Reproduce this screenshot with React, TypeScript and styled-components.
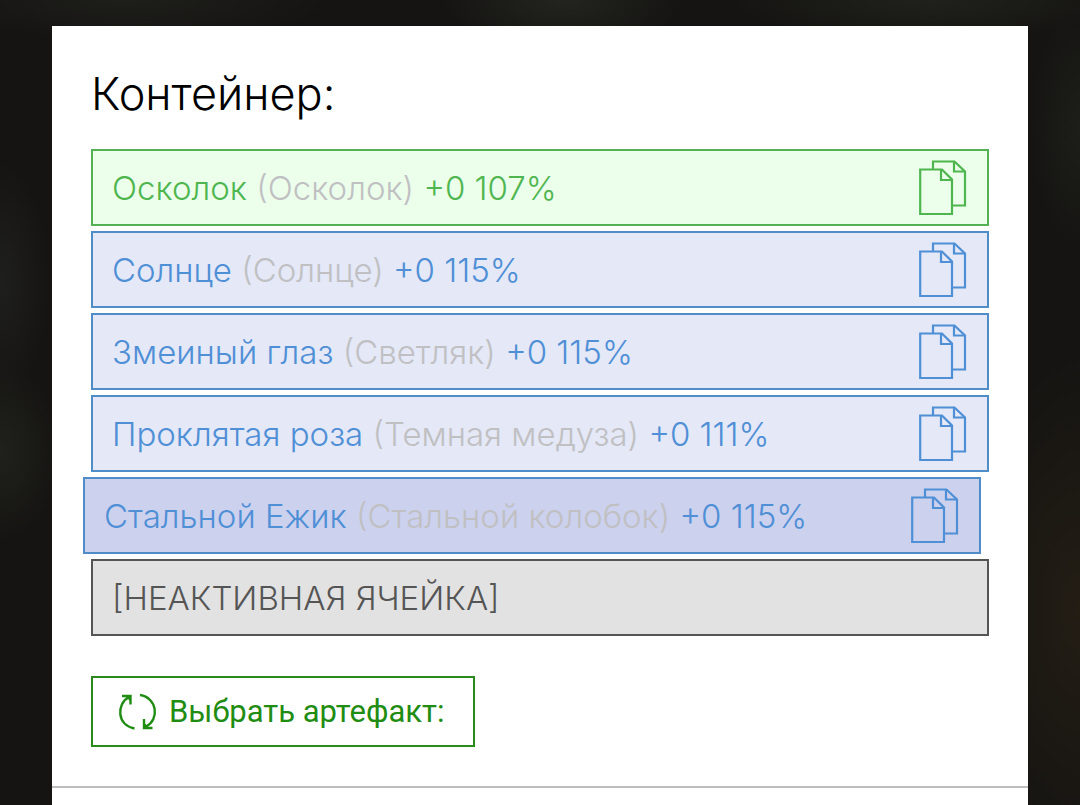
import React from "react";
import styled, { createGlobalStyle } from "styled-components";

const GlobalStyle = createGlobalStyle`
  *, *::before, *::after { box-sizing: border-box; }
  body {
    margin: 0;
    background:
      radial-gradient(ellipse 120px 260px at 100% 76%, #231d14, transparent),
      radial-gradient(ellipse 60px 90px at 0 56%, #20211c, transparent),
      radial-gradient(ellipse 50px 120px at 0 35%, #1f1f1d, transparent),
      radial-gradient(ellipse 50px 120px at 100% 16%, #1d1e1a, transparent),
      radial-gradient(ellipse 120px 50px at 52% 0, #232420, transparent),
      radial-gradient(ellipse 200px 40px at 86% 0, #20211c, transparent),
      radial-gradient(ellipse 200px 40px at 12% 0, #1e1e1b, transparent),
      #151412;
    font-family: Inter, "Noto Sans", sans-serif;
  }
`;

const Page = styled.main`
  display: flex;
  min-height: 100vh;
  padding: 26px 52px 0;
`;

const Card = styled.div`
  flex: 1;
  min-width: 0;
  background: #fff;
`;

const Section = styled.section`
  padding: 40px 39px 39px;
  border-bottom: 2px solid #bdbdbd;
`;

const Title = styled.h1`
  margin: 0 0 27px;
  color: #000;
  font-size: 45px;
  font-weight: 300;
  line-height: 56px;
`;

const SlotList = styled.ul`
  display: flex;
  flex-direction: column;
  gap: 5px;
  margin: 0 0 40px;
  padding: 0;
  list-style: none;
`;

type Tone = "green" | "blue" | "selected" | "inactive";

const tones: Record<Tone, { color: string; border: string; fill: string }> = {
  green: { color: "#4fb64f", border: "#54b154", fill: "#ebffeb" },
  blue: { color: "#4f8fd6", border: "#508cc8", fill: "#e4e8f7" },
  selected: { color: "#4f8fd6", border: "#508cc8", fill: "#ccd1ee" },
  inactive: { color: "#555", border: "#555", fill: "#e2e2e2" },
};

const Slot = styled.li<{ $tone: Tone }>`
  display: flex;
  align-items: center;
  justify-content: space-between;
  min-height: 77px;
  margin: ${({ $tone }) => ($tone === "selected" ? "0 8px 0 -8px" : "0")};
  padding: 0 20px 0 19px;
  border: 2px solid ${({ $tone }) => tones[$tone].border};
  background: ${({ $tone }) => tones[$tone].fill};
  color: ${({ $tone }) => tones[$tone].color};
  font-size: 33px;
  font-weight: 300;
  line-height: 40px;
`;

const BaseName = styled.span`
  color: #c0c0c2;
`;

const CopyButton = styled.button`
  display: flex;
  padding: 0;
  border: 0;
  background: none;
  color: inherit;
  cursor: pointer;
`;

const PickButton = styled.button`
  display: inline-flex;
  align-items: center;
  gap: 11px;
  height: 71px;
  padding: 0 29px 0 25px;
  border: 2px solid #2a8a1c;
  background: #fff;
  color: #1f8c12;
  font: 400 31px/40px Roboto, sans-serif;
  cursor: pointer;
`;

const CopyIcon = () => (
  <svg width="48" height="56" viewBox="0 0 48 56" fill="none" stroke="currentColor" strokeWidth="2.200" aria-hidden="true">
    <path d="M14 9V1.500H35.500L46 11.500V45.500H33" />
    <path d="M35 1.500V11.500H46" />
    <path d="M1.200 9.500H23L33 19.500V54H1.200Z" />
    <path d="M22 9.500V20H33" />
  </svg>
);

const RefreshIcon = () => (
  <svg width="40" height="38" viewBox="0 0 40 38" fill="none" stroke="currentColor" strokeWidth="2.400" aria-hidden="true">
    <path d="M11 4C-2 11 -1 32.500 16.500 35.500" />
    <path d="M4 3H12.500V11.500" />
    <path d="M7 3H12.500V8.500Z" fill="currentColor" stroke="none" />
    <path d="M22 2C39 4.500 42 26.500 28 33.500" />
    <path d="M26 26V35H34.500" />
    <path d="M26 29.500V35H31.500Z" fill="currentColor" stroke="none" />
  </svg>
);

interface Artifact {
  name: string;
  base: string;
  stats: string;
  tone: Tone;
}

const artifacts: Artifact[] = [
  { name: "Осколок", base: "Осколок", stats: "+0 107%", tone: "green" },
  { name: "Солнце", base: "Солнце", stats: "+0 115%", tone: "blue" },
  { name: "Змеиный глаз", base: "Светляк", stats: "+0 115%", tone: "blue" },
  { name: "Проклятая роза", base: "Темная медуза", stats: "+0 111%", tone: "blue" },
  { name: "Стальной Ежик", base: "Стальной колобок", stats: "+0 115%", tone: "selected" },
];

export default function App() {
  return (
    <>
      <GlobalStyle />
      <Page>
        <Card>
          <Section>
            <Title>Контейнер:</Title>
            <SlotList>
              {artifacts.map(({ name, base, stats, tone }) => (
                <Slot key={name} $tone={tone}>
                  <span>
                    {name} <BaseName>({base})</BaseName> {stats}
                  </span>
                  <CopyButton type="button" aria-label={`Копировать: ${name}`}>
                    <CopyIcon />
                  </CopyButton>
                </Slot>
              ))}
              <Slot $tone="inactive">[НЕАКТИВНАЯ ЯЧЕЙКА]</Slot>
            </SlotList>
            <PickButton type="button">
              <RefreshIcon />
              Выбрать артефакт:
            </PickButton>
          </Section>
        </Card>
      </Page>
    </>
  );
}
